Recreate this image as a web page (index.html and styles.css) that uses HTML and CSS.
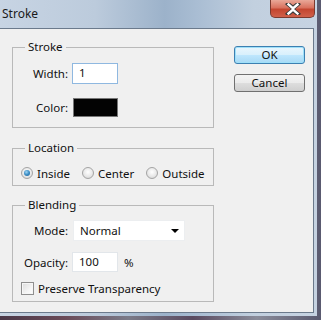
FILE: index.html
```html
<!DOCTYPE html>
<html>
<head>
<meta charset="utf-8">
<link rel="stylesheet" href="styles.css">
</head>
<body>
<div class="window">
  <div class="titlebar">
    <span class="title">Stroke</span>
    <div class="close">
      <svg width="20" height="12" viewBox="0 0 20 12"><path d="M5 1 L10 5 L15 1 M5 11 L10 7 L15 11" stroke="#3a3a3a" stroke-width="4.2" fill="none" stroke-linecap="square"/><path d="M5.5 1.5 L10 5.5 L14.5 1.5 M5.5 10.5 L10 6.5 L14.5 10.5" stroke="#ffffff" stroke-width="2.4" fill="none" stroke-linecap="square"/></svg>
    </div>
  </div>
  <div class="client">
    <div class="groups">
      <fieldset class="group g-stroke">
        <legend>Stroke</legend>
        <div class="form">
          <span class="lbl">Width:</span>
          <div class="field focus w-in">1</div>
          <span class="lbl">Color:</span>
          <div class="swatch"></div>
        </div>
      </fieldset>
      <fieldset class="group g-location">
        <legend>Location</legend>
        <div class="radios">
          <span class="opt"><span class="radio on"></span>Inside</span>
          <span class="opt"><span class="radio"></span>Center</span>
          <span class="opt"><span class="radio"></span>Outside</span>
        </div>
      </fieldset>
      <fieldset class="group g-blend">
        <legend>Blending</legend>
        <div class="form blend">
          <span class="lbl">Mode:</span>
          <div class="select"><span>Normal</span><span class="arrow"></span></div>
          <span class="lbl">Opacity:</span>
          <div class="op"><div class="field o-in">100</div><span class="pct">%</span></div>
        </div>
        <div class="check"><span class="box"></span>Preserve Transparency</div>
      </fieldset>
    </div>
    <div class="buttons">
      <div class="btn default">OK</div>
      <div class="btn">Cancel</div>
    </div>
  </div>
</div>
</body>
</html>
```
FILE: styles.css
```css
html, body {
  margin: 0;
  padding: 0;
}
body {
  width: 321px;
  height: 320px;
  overflow: hidden;
  background: linear-gradient(90deg, #4a3848 0%, #6a4a58 20%, #7a7a88 40%, #5a4a60 60%, #8a8c9a 80%, #5a5a70 100%);
  font-family: "Noto Sans", "Open Sans", sans-serif;
  font-size: 11.5px;
  color: #111;
}
.window {
  width: 317px;
  height: 316px;
  background: linear-gradient(90deg, #c7d4e3 0%, #bccbdc 30%, #9cb2ca 52%, #a9bdd3 62%, #c2d0df 80%, #c6d3e2 100%);
  display: flex;
  flex-direction: column;
}
.titlebar {
  height: 28px;
  display: flex;
  justify-content: space-between;
  align-items: flex-start;
}
.title {
  margin: 6px 0 0 2px;
  line-height: 16px;
  font-size: 12px;
  color: #1a1a1a;
}
.close {
  width: 45px;
  height: 18px;
  margin-right: 2px;
  box-sizing: border-box;
  border: 1px solid #7b3a2f;
  border-top: none;
  border-radius: 0 0 5px 5px;
  background: linear-gradient(180deg, #e9a898 0%, #d9725f 45%, #c44630 55%, #d0604a 100%);
  display: flex;
  align-items: center;
  justify-content: center;
}
.client {
  flex: 1;
  margin-right: 3px;
  margin-bottom: 3px;
  background: #f0f0f0;
  border: 1px solid #6b7a8c;
  border-left: none;
  display: flex;
  padding: 11px 0 0 12px;
}
.groups {
  width: 202px;
}
.group {
  margin: 0;
  border: 1px solid #b9b9b9;
  padding: 0 8px;
  box-sizing: border-box;
  width: 202px;
}
.group legend {
  margin-left: 4px;
  padding: 0 3px;
  line-height: 14px;
}
.g-stroke {
  padding-top: 9px;
  padding-bottom: 10px;
}
.g-location {
  margin-top: 13px;
  padding-top: 11px;
  padding-bottom: 5px;
}
.g-blend {
  margin-top: 12px;
  padding-top: 8px;
  padding-bottom: 6px;
}
.form {
  display: grid;
  grid-template-columns: 47px auto;
  column-gap: 4px;
  row-gap: 14px;
  align-items: center;
  justify-items: start;
}
.form .lbl {
  justify-self: end;
}
.field {
  box-sizing: border-box;
  background: #fff;
  border: 1px solid #e2e6ea;
  padding-left: 6px;
  line-height: 18px;
}
.field.focus {
  border-color: #8fb8e0;
}
.w-in {
  width: 46px;
  height: 21px;
}
.swatch {
  width: 45px;
  height: 19px;
  box-sizing: border-box;
  margin-left: 1px;
  background: #030303;
  border: 1px solid #777;
}
.radios {
  display: flex;
  gap: 12px;
  height: 14px;
  align-items: center;
}
.opt {
  display: flex;
  align-items: center;
  gap: 4px;
}
.radio {
  width: 10px;
  height: 10px;
  border-radius: 50%;
  border: 1px solid #a4a4a4;
  background: radial-gradient(circle at 50% 40%, #ffffff 0%, #e6e6e6 60%, #cccccc 100%);
  position: relative;
}
.radio.on::after {
  content: "";
  position: absolute;
  left: 2px;
  top: 2px;
  width: 6px;
  height: 6px;
  border-radius: 50%;
  background: radial-gradient(circle at 40% 35%, #9fd6f5 0%, #3a8cc4 50%, #1d5f93 100%);
}
.blend {
  row-gap: 11px;
}
.select {
  width: 112px;
  height: 21px;
  margin-left: 1px;
  box-sizing: border-box;
  background: #fff;
  border: 1px solid #eceef0;
  display: flex;
  align-items: center;
  justify-content: space-between;
  padding: 0 3px 0 6px;
}
.arrow {
  width: 0;
  height: 0;
  border-left: 4px solid transparent;
  border-right: 4px solid transparent;
  border-top: 4px solid #000;
  margin-right: 2px;
}
.op {
  display: flex;
  align-items: center;
  gap: 6px;
}
.o-in {
  width: 46px;
  height: 20px;
}
.check {
  display: flex;
  align-items: center;
  gap: 4px;
  margin-top: 10px;
  height: 13px;
}
.box {
  width: 11px;
  height: 11px;
  border: 1px solid #8f8f8f;
  background: linear-gradient(135deg, #dcdcdc 0%, #f4f4f4 60%, #ffffff 100%);
  box-shadow: inset 0 0 0 1px #f6f6f6;
}
.buttons {
  margin-left: 20px;
  margin-top: 6px;
  display: flex;
  flex-direction: column;
  gap: 10px;
}
.btn {
  width: 71px;
  height: 18px;
  box-sizing: border-box;
  border: 1px solid #707070;
  border-radius: 3px;
  background: linear-gradient(180deg, #f3f3f3 0%, #ebebeb 48%, #dddddd 52%, #cfcfcf 100%);
  text-align: center;
  line-height: 16px;
}
.btn.default {
  border-color: #3c7fb1;
  background: linear-gradient(180deg, #eaf6fd 0%, #d9f0fc 48%, #bee6fd 52%, #a7d9f5 100%);
  box-shadow: inset 0 0 0 1px #9fe0f9;
}
```
